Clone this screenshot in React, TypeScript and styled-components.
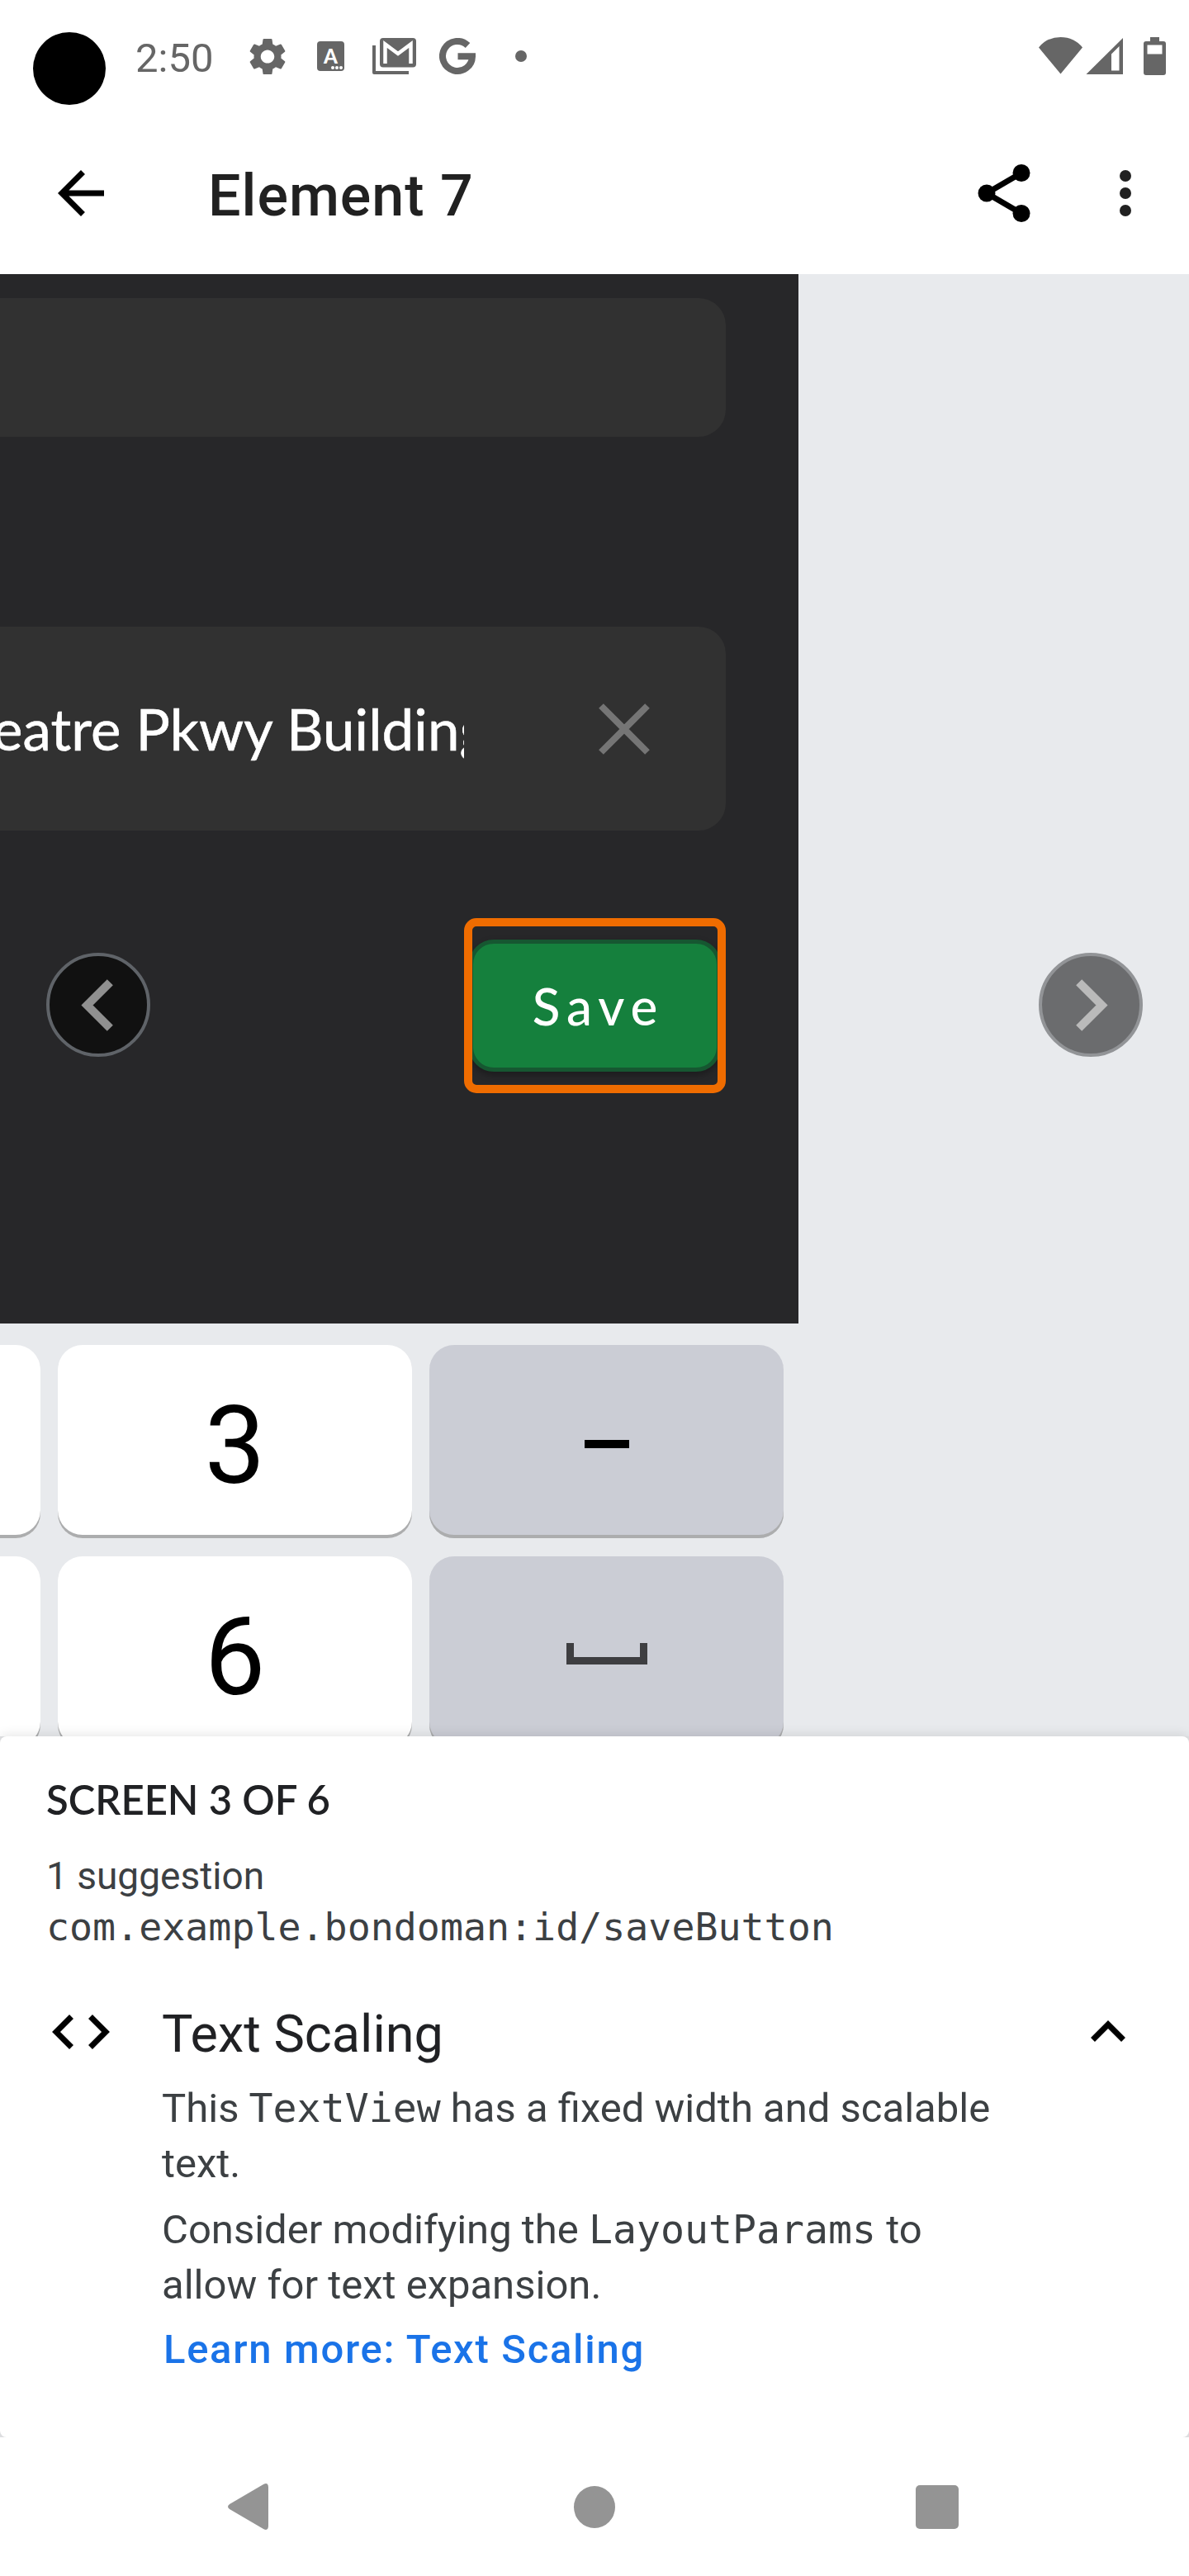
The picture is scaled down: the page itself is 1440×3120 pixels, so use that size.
import React from "react";
import styled, { createGlobalStyle } from "styled-components";

const GlobalStyle = createGlobalStyle`
  *, *::before, *::after { box-sizing: border-box; }
  body { margin: 0; background: #fff; }
  button { font: inherit; border: 0; background: none; padding: 0; margin: 0; }
  svg { display: block; flex: none; }
  h1, h2, h3, p { margin: 0; font-weight: 400; }
`;

const roboto = `Roboto, "Liberation Sans", sans-serif`;
const rounded = `Lato, Roboto, sans-serif`;
const mono = `"DejaVu Sans Mono", "Liberation Mono", monospace`;

const Screen = styled.main`
  position: relative;
  display: flex;
  flex-direction: column;
  width: 1440px;
  height: 3120px;
  overflow: hidden;
  background: #e2e3e5;
  font-family: ${roboto};
`;

const Camera = styled.div`
  position: absolute;
  left: 40px;
  top: 39px;
  width: 88px;
  height: 88px;
  border-radius: 50%;
  background: #000;
`;

const StatusBar = styled.header`
  display: flex;
  align-items: center;
  justify-content: space-between;
  height: 136px;
  padding: 0 28px 0 164px;
  background: #fff;
  color: #666;
`;

const StatusGroup = styled.div`
  display: flex;
  align-items: center;
`;

const Clock = styled.span`
  width: 138px;
  padding-top: 5px;
  font-size: 49px;
  line-height: 60px;
`;

const AppBar = styled.nav`
  display: flex;
  align-items: center;
  height: 196px;
  padding: 0 70px;
  background: #fff;
`;

const Title = styled.h1`
  flex: 1;
  margin-left: 126px;
  padding-top: 6px;
  font-size: 70px;
  font-weight: 500;
  line-height: 82px;
  letter-spacing: 1px;
  color: #212121;
`;

const IconButton = styled.button<{ $gap?: number }>`
  display: flex;
  margin-left: ${(p) => p.$gap ?? 0}px;
`;

const Stage = styled.section`
  position: relative;
  height: 1771px;
  overflow: hidden;
  background: #e8eaed;
`;

const Capture = styled.div`
  width: 967px;
`;

const Form = styled.div`
  display: flex;
  flex-direction: column;
  height: 1271px;
  padding: 29px 88px 0 0;
  background: #272729;
`;

const Field = styled.div<{ $height: number; $after: number }>`
  display: flex;
  align-items: center;
  justify-content: space-between;
  height: ${(p) => p.$height}px;
  margin-bottom: ${(p) => p.$after}px;
  padding-right: 92px;
  border-radius: 0 33px 33px 0;
  background: #313131;
`;

const FieldText = styled.span`
  width: 562px;
  overflow: hidden;
  white-space: nowrap;
  text-indent: -9px;
  font-family: ${rounded};
  font-size: 69px;
  line-height: 90px;
  letter-spacing: 0.1px;
  color: #fff;
  -webkit-text-stroke: 0.6px #fff;
`;

const Highlight = styled.div`
  align-self: flex-end;
  display: flex;
  flex-direction: column;
  justify-content: center;
  width: 317px;
  height: 212px;
  border: 10px solid #ef6c00;
  border-radius: 15px;
  overflow: hidden;
`;

const SaveButton = styled.button`
  height: 160px;
  margin: 0 -4px;
  padding-left: 8px;
  border: 5px solid #165731;
  border-radius: 30px;
  background: #15803d;
  box-shadow: 0 4px 8px rgba(0, 0, 0, 0.3);
  font-family: ${rounded};
  font-size: 62px;
  font-weight: 500;
  line-height: 76px;
  letter-spacing: 8px;
  color: #fff;
`;

const Keyboard = styled.div`
  display: grid;
  grid-template-columns: 49px 429px 429px;
  grid-auto-rows: 234px;
  gap: 22px 21px;
  padding-top: 26px;
`;

const Key = styled.div<{ $muted?: boolean; $edge?: boolean }>`
  display: flex;
  align-items: center;
  justify-content: center;
  padding-top: 10px;
  border-radius: ${(p) => (p.$edge ? "0 30px 30px 0" : "30px")};
  background: ${(p) => (p.$muted ? "#cbcdd5" : "#fff")};
  box-shadow: inset 0 -4px 0 #acadae;
  font-size: 131px;
  line-height: 150px;
  color: #000;

  svg {
    margin-bottom: 10px;
  }
`;

const Minus = styled.span`
  width: 54px;
  height: 10px;
  margin-bottom: 4px;
  background: #000;
`;

const RoundButton = styled.button<{ $side: "left" | "right" }>`
  position: absolute;
  top: 822px;
  ${(p) => p.$side}: 56px;
  display: flex;
  align-items: center;
  justify-content: center;
  width: 126px;
  height: 126px;
  padding-${(p) => (p.$side === "left" ? "right" : "left")}: 3px;
  border-radius: 50%;
  border: 4px solid ${(p) => (p.$side === "left" ? "#5f6368" : "#929497")};
  background: ${(p) => (p.$side === "left" ? "#111" : "#6b6c6e")};
  color: ${(p) => (p.$side === "left" ? "#909090" : "#bababa")};
`;

const Sheet = styled.section`
  position: relative;
  height: 849px;
  padding: 46px 56px 0;
  border-radius: 8px;
  background: #fff;
  box-shadow: 0 -2px 14px rgba(0, 0, 0, 0.1);
  color: #3c4043;
`;

const Counter = styled.h2`
  height: 92px;
  font-family: ${rounded};
  font-size: 49px;
  font-weight: 600;
  line-height: 60px;
  color: #202124;
`;

const Summary = styled.p`
  font-size: 46px;
  line-height: 62px;
`;

const Mono = styled.span<{ $size: number }>`
  font-family: ${mono};
  font-size: ${(p) => p.$size}px;
  line-height: 1;
`;

const Issue = styled.article`
  display: grid;
  grid-template-columns: 140px 1040px auto;
  margin-top: 59px;
`;

const IssueIcon = styled.div<{ $top: number; $left: number }>`
  padding: ${(p) => p.$top}px 0 0 ${(p) => p.$left}px;
`;

const IssueTitle = styled.h3`
  height: 96px;
  font-size: 63px;
  line-height: 80px;
  color: #202124;
`;

const Paragraph = styled.p`
  margin-bottom: 13px;
  font-size: 49px;
  line-height: 67px;
`;

const LearnMore = styled.a`
  display: block;
  padding: 2px 0 0 2px;
  font-size: 49px;
  font-weight: 500;
  line-height: 60px;
  letter-spacing: 1.7px;
  color: #1a73e8;
`;

const NavBar = styled.footer`
  position: relative;
  display: flex;
  align-items: center;
  justify-content: space-between;
  height: 168px;
  padding: 0 279px 0 276px;
  background: #fff;
`;

const HomeIcon = styled.span`
  width: 50px;
  height: 51px;
  margin-left: 6px;
  border-radius: 50%;
  background: #949494;
`;

const RecentsIcon = styled.span`
  width: 52px;
  height: 53px;
  border-radius: 5px;
  background: #949494;
`;

const GearIcon = () => (
  <svg width="44" height="45" viewBox="2.4 2 19.2 20" preserveAspectRatio="none" fill="currentColor">
    <path d="M19.14 12.94c.04-.3.06-.61.06-.94 0-.32-.02-.64-.07-.94l2.03-1.58c.18-.14.23-.41.12-.61l-1.92-3.32c-.12-.22-.37-.29-.59-.22l-2.39.96c-.5-.38-1.03-.7-1.62-.94l-.36-2.54c-.04-.24-.24-.41-.48-.41h-3.84c-.24 0-.43.17-.47.41l-.36 2.54c-.59.24-1.13.57-1.62.94l-2.39-.96c-.22-.08-.47 0-.59.22L2.74 8.87c-.12.21-.08.47.12.61l2.03 1.58c-.05.3-.09.63-.09.94s.02.64.07.94l-2.03 1.58c-.18.14-.23.41-.12.61l1.92 3.32c.12.22.37.29.59.22l2.39-.96c.5.38 1.03.7 1.62.94l.36 2.54c.05.24.24.41.48.41h3.84c.24 0 .44-.17.47-.41l.36-2.54c.59-.24 1.13-.56 1.62-.94l2.39.96c.22.08.47 0 .59-.22l1.92-3.32c.12-.22.07-.47-.12-.61l-2.01-1.58zM12 15.6c-1.98 0-3.6-1.62-3.6-3.6s1.62-3.6 3.6-3.6 3.6 1.62 3.6 3.6-1.62 3.6-3.6 3.6z" />
  </svg>
);

const KeyboardBadge = styled.span`
  position: relative;
  display: flex;
  justify-content: center;
  width: 33px;
  height: 36px;
  margin: 0 34px 0 38px;
  border-radius: 4px;
  background: #666;
  font: 900 24px/35px ${rounded};
  color: #fff;
`;

const BadgeDots = styled.i`
  position: absolute;
  right: 2px;
  bottom: 2px;
  width: 4px;
  height: 4px;
  border-radius: 50%;
  background: #fff;
  box-shadow: -5px 0 #fff, -10px 0 #fff;
`;

const Dot = styled.span`
  width: 14px;
  height: 14px;
  margin-left: 48px;
  border-radius: 50%;
  background: #666;
`;

const MailStackIcon = () => (
  <svg width="53" height="44" viewBox="0 0 53 44">
    <path d="M2 9v33h42" fill="none" stroke="#666" strokeWidth="4" strokeLinejoin="round" />
    <rect x="9" y="0" width="44" height="35.500" rx="4" fill="#666" />
    <path d="M15.500 31V7.500L31 19 46.500 7.500V31" fill="none" stroke="#fff" strokeWidth="4.500" />
  </svg>
);

const GoogleMark = styled.svg`
  margin-left: 28px;
`;

const GoogleIcon = () => (
  <GoogleMark width="44" height="45" viewBox="0 0 44 45">
    <path d="M34.500 9A18 18 0 1 0 40 22.300H22.500" fill="none" stroke="#666" strokeWidth="8" />
  </GoogleMark>
);

const SystemIcons = () => (
  <svg width="154" height="46" viewBox="0 0 154 46" fill="#666">
    <path d="M0 12.500Q10 0 26.500 0T53 12.500L26.500 44.500Z" />
    <path fillRule="evenodd" d="M57.500 45L102 1v44ZM88 20.500V40.500H97.500V11Z" />
    <path fillRule="evenodd" d="M135 0h11v5h5q3 0 3 3v35q0 3-3 3h-21q-3 0-3-3V8q0-3 3-3h5ZM131.500 9.500V20.500H149.500V9.500Z" />
  </svg>
);

const Chevron = ({ flip }: { flip?: boolean }) => (
  <svg width="39" height="63" viewBox="0 0 39 63">
    <path
      d={flip ? "M3.700 3.700L31.500 31.500L3.700 59.300" : "M35.300 3.700L7.500 31.500L35.300 59.300"}
      fill="none"
      stroke="currentColor"
      strokeWidth="10"
    />
  </svg>
);

export default function App() {
  return (
    <Screen>
      <GlobalStyle />
      <StatusBar>
        <StatusGroup>
          <Clock>2:50</Clock>
          <GearIcon />
          <KeyboardBadge>
            A<BadgeDots />
          </KeyboardBadge>
          <MailStackIcon />
          <GoogleIcon />
          <Dot />
        </StatusGroup>
        <SystemIcons />
      </StatusBar>
      <Camera />

      <AppBar>
        <IconButton aria-label="Back">
          <svg width="56" height="56" viewBox="4 4 16 16">
            <path d="M20 11H7.830l5.590-5.590L12 4l-8 8 8 8 1.410-1.410L7.830 13H20v-2z" />
          </svg>
        </IconButton>
        <Title>Element 7</Title>
        <IconButton aria-label="Share">
          <svg width="64" height="70" viewBox="0 0 64 70">
            <path d="M53 10.500L11 35L53 59.500" fill="none" stroke="#000" strokeWidth="7" />
            <circle cx="53" cy="10.500" r="10.500" />
            <circle cx="11" cy="35" r="10.500" />
            <circle cx="53" cy="59.500" r="10.500" />
          </svg>
        </IconButton>
        <IconButton aria-label="More options" $gap={108}>
          <svg width="14" height="56" viewBox="0 0 14 56" fill="#212121">
            <circle cx="7" cy="7" r="7" />
            <circle cx="7" cy="28" r="7" />
            <circle cx="7" cy="49" r="7" />
          </svg>
        </IconButton>
      </AppBar>

      <Stage>
        <Capture>
          <Form>
            <Field $height={168} $after={230} />
            <Field $height={247} $after={106}>
              <FieldText>eatre Pkwy Building</FieldText>
              <svg width="62" height="62" viewBox="0 0 62 62">
                <path d="M3 3L59 59M59 3L3 59" stroke="#757575" strokeWidth="8" />
              </svg>
            </Field>
            <Highlight>
              <SaveButton>Save</SaveButton>
            </Highlight>
          </Form>
          <Keyboard>
            <Key $edge />
            <Key>3</Key>
            <Key $muted>
              <Minus />
            </Key>
            <Key $edge />
            <Key>6</Key>
            <Key $muted>
              <svg width="98" height="27" viewBox="0 0 98 27">
                <path d="M4.500 1V22.500H93.500V1" fill="none" stroke="#3e3e41" strokeWidth="9" />
              </svg>
            </Key>
          </Keyboard>
        </Capture>
        <RoundButton $side="left" aria-label="Previous">
          <Chevron />
        </RoundButton>
        <RoundButton $side="right" aria-label="Next">
          <Chevron flip />
        </RoundButton>
      </Stage>

      <Sheet>
        <Counter>SCREEN 3 OF 6</Counter>
        <Summary>1 suggestion</Summary>
        <Summary>
          <Mono $size={46.6}>com.example.bondoman:id/saveButton</Mono>
        </Summary>
        <Issue>
          <IssueIcon $top={16} $left={7}>
            <svg width="70" height="42" viewBox="0 0 70 42" fill="none" stroke="#000" strokeWidth="7">
              <path d="M23.500 2.500L5 21L23.500 39.500M46.500 2.500L65 21L46.500 39.500" />
            </svg>
          </IssueIcon>
          <div>
            <IssueTitle>Text Scaling</IssueTitle>
            <Paragraph>
              This <Mono $size={48.2}>TextView</Mono> has a fixed width and scalable
              <br />
              text.
            </Paragraph>
            <Paragraph>
              Consider modifying the <Mono $size={48.2}>LayoutParams</Mono> to
              <br />
              allow for text expansion.
            </Paragraph>
            <LearnMore>Learn more: Text Scaling</LearnMore>
          </div>
          <IssueIcon $top={23} $left={85}>
            <svg width="42" height="26" viewBox="0 0 42 26" fill="none" stroke="#000" strokeWidth="7">
              <path d="M2.500 23.500L21 5L39.500 23.500" />
            </svg>
          </IssueIcon>
        </Issue>
      </Sheet>

      <NavBar>
        <svg width="49" height="56" viewBox="0 0 49 56" fill="#949494">
          <path d="M2 25L43 1Q49-2 49 5V51Q49 58 43 55L2 31Q-2 28 2 25Z" />
        </svg>
        <HomeIcon />
        <RecentsIcon />
      </NavBar>
    </Screen>
  );
}
